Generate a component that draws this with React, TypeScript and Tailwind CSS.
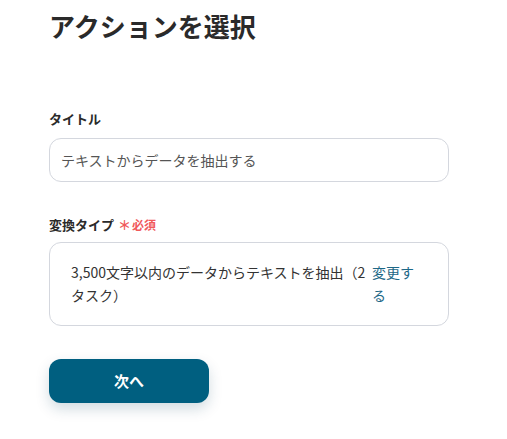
export default function App() {
  return (
    <div
      className="min-h-screen bg-white text-[#333]"
      style={{ fontFamily: '"Noto Sans CJK JP", "Noto Sans", sans-serif' }}
    >
      <div className="ml-[49px] w-[400px] pt-[5px]">
        <h1 className="text-[26px] font-bold leading-[42px] text-[#2a2a2a]">アクションを選択</h1>

        <div className="mt-[62px]">
          <label className="block text-[13px] font-bold leading-[20px] text-[#2a2a2a]">タイトル</label>
          <div className="mt-[9px] flex h-[44px] items-center rounded-[12px] border border-[#d4d7de] px-[11px] text-[14px] text-[#555]">
            テキストからデータを抽出する
          </div>
        </div>

        <div className="mt-[33px]">
          <label className="flex items-center text-[13px] font-bold leading-[20px] text-[#2a2a2a]">
            変換タイプ
            <span className="ml-[4px] text-[13px] text-[#f0595b]">＊</span>
            <span className="ml-[1px] text-[12px] text-[#f0595b]">必須</span>
          </label>
          <div className="mt-[7px] flex h-[84px] items-center gap-[1px] rounded-[12px] border border-[#d4d7de] pl-[21px] pr-[32px] text-[14px] leading-[23px]">
            <p className="flex-1 text-[#333]">3,500文字以内のデータからテキストを抽出（2タスク）</p>
            <a className="w-[44px] text-[#1d6887]">変更する</a>
          </div>
        </div>

        <button className="mt-[33px] h-[44px] w-[160px] rounded-[12px] bg-[#005f80] text-[15px] font-bold text-white shadow-[0_6px_14px_rgba(0,60,90,0.18)]">
          次へ
        </button>
      </div>
    </div>
  );
}
